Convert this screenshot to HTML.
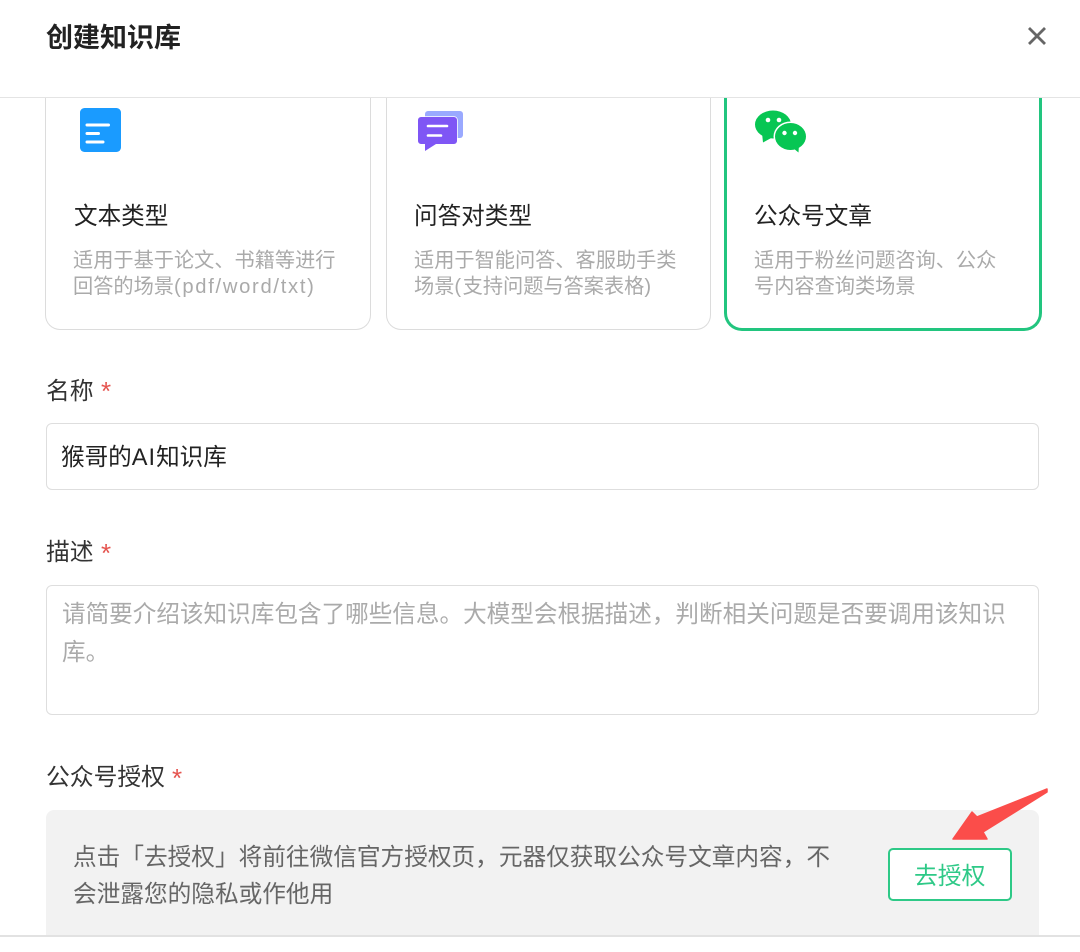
<!DOCTYPE html>
<html lang="zh-CN"><head><meta charset="utf-8"><title>创建知识库</title>
<style>
html,body{margin:0;padding:0;background:#fff}
body{width:1080px;height:952px;position:relative;overflow:hidden;font-family:"Liberation Sans","Noto Sans CJK SC",sans-serif;filter:blur(.35px)}
.t{position:absolute;white-space:nowrap;line-height:1;font-weight:400}
.b{position:absolute;box-sizing:border-box}
.h{font-size:23.6px;color:#222}
.d{font-size:20.2px;color:#aaa}
.l{font-size:23.8px;color:#333}
.r{color:#e5544f;font-size:26px}
.card{border:1.5px solid #dcdcdc;border-top:none;border-radius:0 0 15px 15px;background:#fff}
</style></head><body>
<div class="b card" style="left:45px;top:97px;width:326px;height:233px"></div>
<div class="b card" style="left:386px;top:97px;width:325px;height:233px"></div>
<div class="b card" style="left:724px;top:97px;width:318px;height:234px;border:3px solid #22c57f;border-top:none;border-radius:0 0 18px 18px"></div>
<div class="b" style="left:0;top:96.500px;width:1080px;height:1.5px;background:#e4e4e4"></div>
<div class="t" style="left:46px;top:25px;font-size:27px;font-weight:700;color:#222">创建知识库</div>
<svg class="b" style="left:1026px;top:25px" width="22" height="22" viewBox="0 0 22 22"><path d="M3 3L19 19M19 3L3 19" stroke="#666" stroke-width="2.800" fill="none"/></svg>

<svg class="b" style="left:78px;top:106px" width="46" height="48" viewBox="0 0 46 48"><rect x="2" y="2" width="41" height="44" rx="4.500" fill="#1a9bff"/><path d="M9 19H30.500M9 27.500H20.500M9 36H25" stroke="#fff" stroke-width="3" stroke-linecap="round" fill="none"/></svg>
<svg class="b" style="left:416px;top:108px" width="50" height="46" viewBox="0 0 50 46"><rect x="9" y="3" width="38" height="27" rx="3" fill="#9aa9ff"/><path d="M5 9H38a3 3 0 0 1 3 3V33a3 3 0 0 1-3 3H20L9 43V36H5a3 3 0 0 1-3-3V12a3 3 0 0 1 3-3z" fill="#7f56f5" stroke="#fff" stroke-width="1.500" paint-order="stroke"/><path d="M12 18H31M12 27.500H25" stroke="#fff" stroke-width="2.600" stroke-linecap="round"/></svg>
<svg class="b" style="left:754px;top:108px" width="54" height="46" viewBox="0 0 54 46"><ellipse cx="19" cy="16.500" rx="18" ry="14" fill="#07c653"/><path d="M8 25L9 34.500L19 29Z" fill="#07c653"/><ellipse cx="36.500" cy="28.500" rx="17" ry="15" fill="#fff"/><ellipse cx="36.500" cy="28.500" rx="15.500" ry="13.500" fill="#07c653"/><path d="M39 40L44.500 44.500L45 36Z" fill="#07c653"/><circle cx="14" cy="12" r="2.300" fill="#fff"/><circle cx="25" cy="12" r="2.300" fill="#fff"/><circle cx="30.500" cy="25" r="2.200" fill="#fff"/><circle cx="41" cy="25" r="2.200" fill="#fff"/></svg>

<div class="t h" style="left:74px;top:206px">文本类型</div>
<div class="t d" style="left:73px;top:251px">适用于基于论文、书籍等进行</div>
<div class="t d" style="left:73px;top:277px">回答的场景<span style="letter-spacing:1.700px">(pdf/word/txt)</span></div>
<div class="t h" style="left:414px;top:206px">问答对类型</div>
<div class="t d" style="left:414px;top:251px">适用于智能问答、客服助手类</div>
<div class="t d" style="left:414px;top:277px">场景<span style="letter-spacing:1.500px">(</span>支持问题与答案表格)</div>
<div class="t h" style="left:754px;top:206px">公众号文章</div>
<div class="t d" style="left:754px;top:251px">适用于粉丝问题咨询、公众</div>
<div class="t d" style="left:754px;top:277px">号内容查询类场景</div>

<div class="t l" style="left:46px;top:380px">名称</div>
<div class="t r" style="left:101px;top:378px">*</div>
<div class="b" style="left:46px;top:423px;width:993px;height:67px;border:1.5px solid #dedede;border-radius:6px"></div>
<div class="t" style="left:61px;top:447px;font-size:23.6px;color:#222">猴哥的<span style="letter-spacing:1px">AI</span>知识库</div>

<div class="t l" style="left:46px;top:541px">描述</div>
<div class="t r" style="left:101px;top:540px">*</div>
<div class="b" style="left:46px;top:585px;width:993px;height:130px;border:1.5px solid #dedede;border-radius:6px"></div>
<div class="t" style="left:62px;top:604px;font-size:23.6px;color:#aaa">请简要介绍该知识库包含了哪些信息。大模型会根据描述，判断相关问题是否要调用该知识</div>
<div class="t" style="left:62px;top:642px;font-size:23.6px;color:#aaa">库。</div>

<div class="t l" style="left:46px;top:766px">公众号授权</div>
<div class="t r" style="left:172px;top:765px">*</div>
<div class="b" style="left:46px;top:810px;width:993px;height:126px;background:#f2f2f2;border-radius:8px 8px 0 0"></div>
<div class="t" style="left:73px;top:847px;font-size:23.66px;color:#666">点击「去授权」将前往微信官方授权页，元器仅获取公众号文章内容，不</div>
<div class="t" style="left:73px;top:884px;font-size:23.66px;color:#666">会泄露您的隐私或作他用</div>
<div class="b" style="left:888px;top:848px;width:124px;height:53px;background:#fff;border:2px solid #2ec987;border-radius:5px"></div>
<div class="t" style="left:914px;top:865px;font-size:23.8px;color:#2ec987">去授权</div>
<svg class="b" style="left:0;top:0" width="1080" height="952" viewBox="0 0 1080 952"><path d="M1047 789L977 817L972 812L953 839L987 839L983 832L1047 792Z" fill="#fb4d4a" stroke="#fb4d4a" stroke-width="1.500" stroke-linejoin="round"/></svg>
<div class="b" style="left:0;top:935px;width:1080px;height:1.5px;background:#e2e2e2"></div>
</body></html>
